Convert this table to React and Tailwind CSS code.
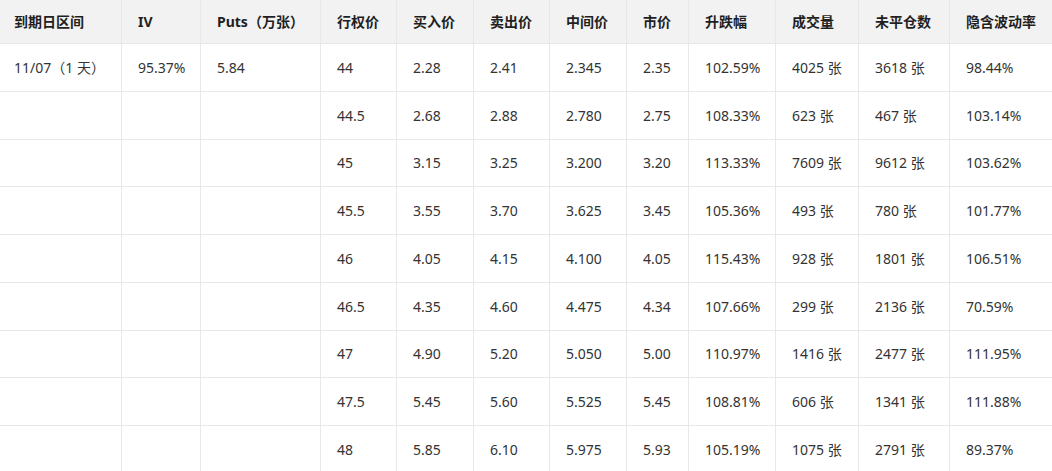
const headers = [
  "到期日区间",
  "IV",
  "Puts（万张）",
  "行权价",
  "买入价",
  "卖出价",
  "中间价",
  "市价",
  "升跌幅",
  "成交量",
  "未平仓数",
  "隐含波动率",
];

const rows = [
  ["44", "2.28", "2.41", "2.345", "2.35", "102.59%", "4025 张", "3618 张", "98.44%"],
  ["44.5", "2.68", "2.88", "2.780", "2.75", "108.33%", "623 张", "467 张", "103.14%"],
  ["45", "3.15", "3.25", "3.200", "3.20", "113.33%", "7609 张", "9612 张", "103.62%"],
  ["45.5", "3.55", "3.70", "3.625", "3.45", "105.36%", "493 张", "780 张", "101.77%"],
  ["46", "4.05", "4.15", "4.100", "4.05", "115.43%", "928 张", "1801 张", "106.51%"],
  ["46.5", "4.35", "4.60", "4.475", "4.34", "107.66%", "299 张", "2136 张", "70.59%"],
  ["47", "4.90", "5.20", "5.050", "5.00", "110.97%", "1416 张", "2477 张", "111.95%"],
  ["47.5", "5.45", "5.60", "5.525", "5.45", "108.81%", "606 张", "1341 张", "111.88%"],
  ["48", "5.85", "6.10", "5.975", "5.93", "105.19%", "1075 张", "2791 张", "89.37%"],
];

const cols =
  "grid grid-cols-[122px_79px_120px_76px_77px_76px_77px_62px_87px_83px_91px_1fr]";

function Cell({ children, first, last, header }) {
  return (
    <div
      className={`flex items-center ${first ? "pl-[14px]" : "pl-4"} pr-2 border-b border-[#e8e8e8] ${
        last ? "" : "border-r"
      } ${header ? "h-[44px] bg-[#f2f2f2] font-bold text-[#1f1f1f]" : "h-[47.75px] text-[#333]"} whitespace-nowrap`}
    >
      {children}
    </div>
  );
}

export default function App() {
  return (
    <div
      className="w-[1052px] h-[471px] overflow-hidden bg-white text-[14px]"
      style={{ fontFamily: '"Noto Sans", "Noto Sans CJK SC", sans-serif' }}
    >
      <div className={cols}>
        {headers.map((h, i) => (
          <Cell key={h} header first={i === 0} last={i === headers.length - 1}>
            {h}
          </Cell>
        ))}
      </div>
      {rows.map((r, ri) => (
        <div key={ri} className={cols}>
          <Cell first>{ri === 0 ? "11/07（1 天）" : ""}</Cell>
          <Cell>{ri === 0 ? "95.37%" : ""}</Cell>
          <Cell>{ri === 0 ? "5.84" : ""}</Cell>
          {r.map((v, ci) => (
            <Cell key={ci} last={ci === r.length - 1}>
              {v}
            </Cell>
          ))}
        </div>
      ))}
    </div>
  );
}
